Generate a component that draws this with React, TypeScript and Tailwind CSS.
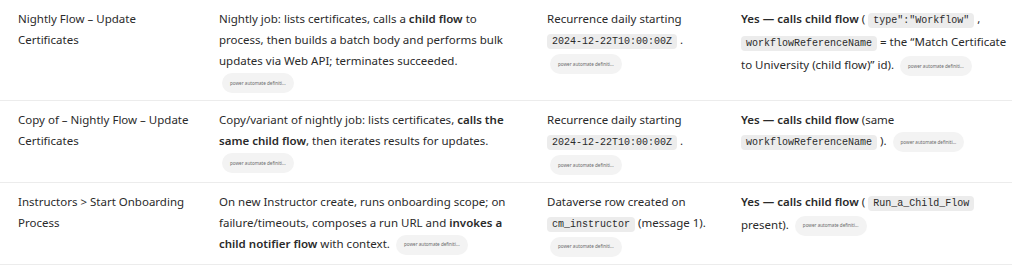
import type { ReactNode } from "react";

function Code({ children }: { children: ReactNode }) {
  return (
    <code className="whitespace-nowrap rounded-[4px] bg-[#ececec] px-[5px] py-[2px] font-['Liberation_Mono',monospace] text-[10px] text-[#2a2a2a]">
      {children}
    </code>
  );
}

function Source() {
  return (
    <span className="ml-[3px] inline-flex h-[20px] items-center rounded-full bg-[#f3f3f3] px-[8px] align-middle text-[4.6px] leading-none text-[#6a6a6a]">
      power automate definiti...
    </span>
  );
}

type Row = {
  name: string;
  what: ReactNode;
  trigger: ReactNode;
  child: ReactNode;
};

const rows: Row[] = [
  {
    name: "Nightly Flow – Update Certificates",
    what: (
      <>
        Nightly job: lists certificates, calls a <b className="font-semibold">child flow</b> to process, then builds a
        batch body and performs bulk updates via Web API; terminates succeeded. <Source />
      </>
    ),
    trigger: (
      <>
        Recurrence daily starting <Code>2024-12-22T10:00:00Z</Code> . <Source />
      </>
    ),
    child: (
      <>
        <b className="font-semibold">Yes — calls child flow</b> ( <Code>type":"Workflow"</Code> ,{" "}
        <Code>workflowReferenceName</Code> = the “Match Certificate to University (child flow)” id). <Source />
      </>
    ),
  },
  {
    name: "Copy of – Nightly Flow – Update Certificates",
    what: (
      <>
        Copy/variant of nightly job: lists certificates, <b className="font-semibold">calls the same child flow</b>,
        then iterates results for updates. <Source />
      </>
    ),
    trigger: (
      <>
        Recurrence daily starting <Code>2024-12-22T10:00:00Z</Code> . <Source />
      </>
    ),
    child: (
      <>
        <b className="font-semibold">Yes — calls child flow</b> (same <Code>workflowReferenceName</Code> ). <Source />
      </>
    ),
  },
  {
    name: "Instructors > Start Onboarding Process",
    what: (
      <>
        On new Instructor create, runs onboarding scope; on failure/timeouts, composes a run URL and{" "}
        <b className="font-semibold">invokes a child notifier flow</b> with context. <Source />
      </>
    ),
    trigger: (
      <>
        Dataverse row created on <Code>cm_instructor</Code> (message 1). <Source />
      </>
    ),
    child: (
      <>
        <b className="font-semibold">Yes — calls child flow</b> ( <Code>Run_a_Child_Flow</Code> present). <Source />
      </>
    ),
  },
];

export default function App() {
  return (
    <div className="h-[270px] w-[1024px] overflow-hidden bg-white font-['Noto_Sans',sans-serif] text-[11.5px] leading-[21px] text-[#2a2a2a]">
      <div className="w-[1012px]">
        {rows.map((r, i) => (
          <div
            key={i}
            className={`grid grid-cols-[201px_328px_194px_1fr] pb-[7px] pl-[18px] pt-[8px] ${
              i > 0 ? "border-t border-[#ececec]" : ""
            } ${i === rows.length - 1 ? "border-b border-[#ececec]" : ""}`}
          >
            <div className="pr-[25px]">{r.name}</div>
            <div className="pr-[36px]">{r.what}</div>
            <div className="pr-[16px]">{r.trigger}</div>
            <div className="pr-[4px]">{r.child}</div>
          </div>
        ))}
      </div>
    </div>
  );
}
